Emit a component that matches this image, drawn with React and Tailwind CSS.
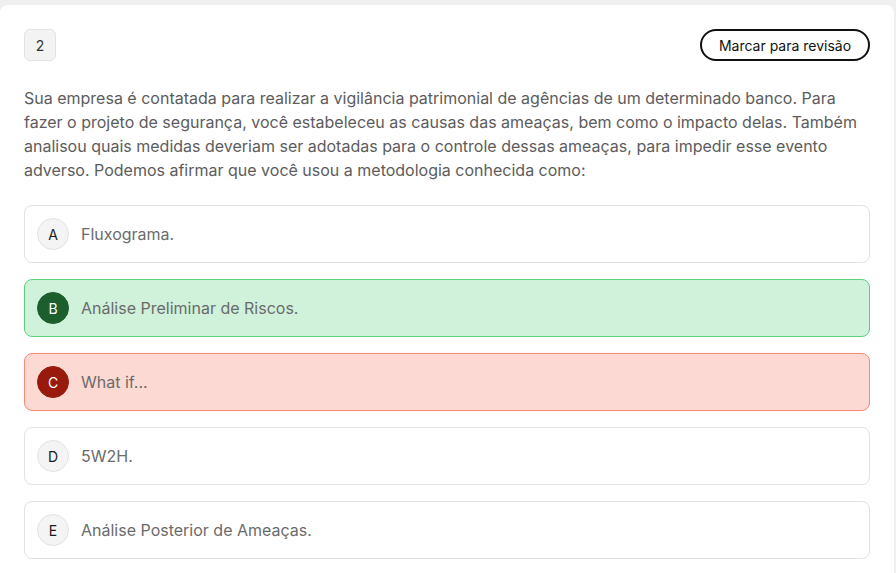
import React from "react";

const options = [
  { l: "A", t: "Fluxograma.", s: "n" },
  { l: "B", t: "Análise Preliminar de Riscos.", s: "ok" },
  { l: "C", t: "What if...", s: "bad" },
  { l: "D", t: "5W2H.", s: "n" },
  { l: "E", t: "Análise Posterior de Ameaças.", s: "n" },
];

function Option({ l, t, s }) {
  const box =
    s === "ok"
      ? "bg-[#d0f1da] border-[#5fd07c]"
      : s === "bad"
      ? "bg-[#fdd9d4] border-[#f7897a]"
      : "bg-white border-[#e2e2e2]";
  const circ =
    s === "ok"
      ? "bg-[#1d5e2f] text-white border-[#1d5e2f]"
      : s === "bad"
      ? "bg-[#981a0c] text-white border-[#981a0c]"
      : "bg-[#f4f4f4] text-[#1b1b1b] border-[#e3e3e3]";
  return (
    <div className={`flex items-center h-[58px] border rounded-lg px-3 gap-3 ${box}`}>
      <div className={`w-8 h-8 rounded-full border flex items-center justify-center text-[14px] ${circ}`}>
        {l}
      </div>
      <span className="text-[16px] text-[#6b6b6b]">{t}</span>
    </div>
  );
}

export default function App() {
  return (
    <div className="min-h-[573px] bg-[#f0f0f0] pt-[5px] overflow-hidden" style={{ fontFamily: "Inter, 'Noto Sans', sans-serif" }}>
      <div className="w-[894px] bg-white rounded-t-lg px-6 pt-6 pb-6 min-h-[600px]">
        <div className="flex items-center justify-between">
          <div className="w-8 h-8 rounded-md bg-[#f3f3f3] border border-[#e2e2e2] flex items-center justify-center text-[14px] text-[#333]">
            2
          </div>
          <button className="h-[32px] w-[170px] rounded-full border-2 border-[#111] text-[14px] text-[#111] flex items-center justify-center">
            Marcar para revisão
          </button>
        </div>
        <p className="mt-[25px] text-[16px] leading-6 text-[#5c5c5c]">
          Sua empresa é contatada para realizar a vigilância patrimonial de agências de um determinado banco. Para fazer o projeto de segurança, você estabeleceu as causas das ameaças, bem como o impacto delas. Também analisou quais medidas deveriam ser adotadas para o controle dessas ameaças, para impedir esse evento adverso. Podemos afirmar que você usou a metodologia conhecida como:
        </p>
        <div className="mt-[23px] flex flex-col gap-4">
          {options.map((o) => (
            <Option key={o.l} {...o} />
          ))}
        </div>
      </div>
    </div>
  );
}
